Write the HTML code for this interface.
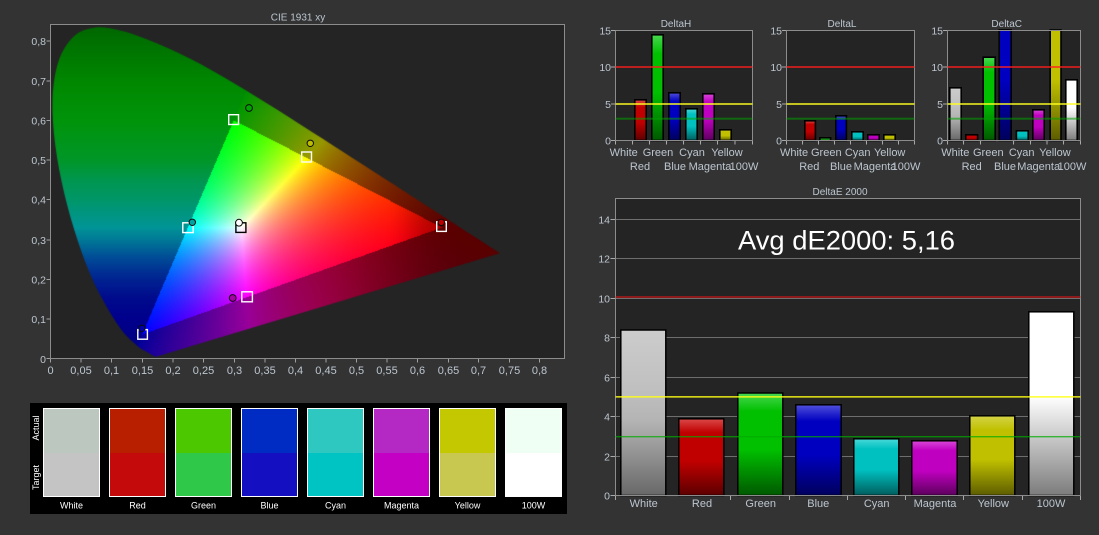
<!DOCTYPE html>
<html><head><meta charset="utf-8"><style>
html,body{margin:0;padding:0;width:1099px;height:535px;overflow:hidden;background:#333}
#g,svg,#p{position:absolute;left:0;top:0}
#p{left:50px;top:24px;width:515px;height:335px;background:#242424}
text{font-family:"Liberation Sans",sans-serif;font-size:11px;fill:#bcc6d0}
.t{font-size:10px;text-anchor:middle}
.m{text-anchor:middle}
.e{text-anchor:end;font-size:10.5px}
.s{font-size:9px;fill:#fff;text-anchor:middle}
</style></head><body>
<div id="p"></div>
<canvas id="g" width="1099" height="535"></canvas>
<svg width="1099" height="535" viewBox="0 0 1099 535" xmlns="http://www.w3.org/2000/svg">
<defs>
<linearGradient id="gr" x1="0" y1="0" x2="0" y2="1"><stop offset="0" stop-color="#dc4848"/><stop offset=".18" stop-color="#c00000"/><stop offset=".55" stop-color="#c00000"/><stop offset="1" stop-color="#5c0000"/></linearGradient>
<linearGradient id="gg" x1="0" y1="0" x2="0" y2="1"><stop offset="0" stop-color="#48d850"/><stop offset=".18" stop-color="#00c000"/><stop offset=".55" stop-color="#00c000"/><stop offset="1" stop-color="#005800"/></linearGradient>
<linearGradient id="gb" x1="0" y1="0" x2="0" y2="1"><stop offset="0" stop-color="#5050dc"/><stop offset=".18" stop-color="#0000c0"/><stop offset=".55" stop-color="#0000c0"/><stop offset="1" stop-color="#00005c"/></linearGradient>
<linearGradient id="gc" x1="0" y1="0" x2="0" y2="1"><stop offset="0" stop-color="#48d8d8"/><stop offset=".18" stop-color="#00c0c0"/><stop offset=".55" stop-color="#00c0c0"/><stop offset="1" stop-color="#005c5c"/></linearGradient>
<linearGradient id="gm" x1="0" y1="0" x2="0" y2="1"><stop offset="0" stop-color="#d848d8"/><stop offset=".18" stop-color="#c000c0"/><stop offset=".55" stop-color="#c000c0"/><stop offset="1" stop-color="#5c005c"/></linearGradient>
<linearGradient id="gy" x1="0" y1="0" x2="0" y2="1"><stop offset="0" stop-color="#d4d448"/><stop offset=".18" stop-color="#c0c000"/><stop offset=".55" stop-color="#c0c000"/><stop offset="1" stop-color="#5c5c00"/></linearGradient>
<linearGradient id="gw" x1="0" y1="0" x2="0" y2="1"><stop offset="0" stop-color="#cccccc"/><stop offset=".35" stop-color="#c0c0c0"/><stop offset=".55" stop-color="#b4b4b4"/><stop offset="1" stop-color="#686868"/></linearGradient>
<linearGradient id="gh" x1="0" y1="0" x2="0" y2="1"><stop offset="0" stop-color="#fff"/><stop offset=".46" stop-color="#fff"/><stop offset="1" stop-color="#7c7c7c"/></linearGradient>
<linearGradient id="gbo" x1="0" y1="0" x2="0" y2="1"><stop offset="0" stop-color="#0000c0"/><stop offset=".45" stop-color="#0000c0"/><stop offset="1" stop-color="#00005c"/></linearGradient>
<linearGradient id="gyo" x1="0" y1="0" x2="0" y2="1"><stop offset="0" stop-color="#c0c000"/><stop offset=".45" stop-color="#c0c000"/><stop offset="1" stop-color="#5c5c00"/></linearGradient>
</defs>

<!-- CIE chart frame -->
<path d="M50.5 24.5H564.5V358.5H50.5Z" fill="none" stroke="#8c8c8c" stroke-width="1"/>
<path fill="none" stroke="#a0a0a0" d="M46.5 41H50M46.5 81H50M46.5 120.5H50M46.5 160H50M46.5 199.5H50M46.5 240H50M46.5 279.5H50M46.5 319H50M46.5 358.5H50M50.5 359V362.5M81 359V362.5M111.5 359V362.5M142.5 359V362.5M173 359V362.5M203.5 359V362.5M234.5 359V362.5M265 359V362.5M295.5 359V362.5M326 359V362.5M356.5 359V362.5M387 359V362.5M417.5 359V362.5M448.5 359V362.5M478.5 359V362.5M509.5 359V362.5M539.5 359V362.5"/>
<text class="t" x="298" y="20.5">CIE 1931 xy</text>
<g>
<text class="e" x="46" y="45">0,8</text><text class="e" x="46" y="85">0,7</text><text class="e" x="46" y="124.5">0,6</text><text class="e" x="46" y="164">0,5</text><text class="e" x="46" y="203.5">0,4</text><text class="e" x="46" y="244">0,3</text><text class="e" x="46" y="283.5">0,2</text><text class="e" x="46" y="323">0,1</text><text class="e" x="46" y="363">0</text>
</g>
<g>
<text class="m" x="50.5" y="374">0</text><text class="m" x="81" y="374">0,05</text><text class="m" x="111.5" y="374">0,1</text><text class="m" x="142.5" y="374">0,15</text><text class="m" x="173" y="374">0,2</text><text class="m" x="203.5" y="374">0,25</text><text class="m" x="234.5" y="374">0,3</text><text class="m" x="265" y="374">0,35</text><text class="m" x="295.5" y="374">0,4</text><text class="m" x="326" y="374">0,45</text><text class="m" x="356.5" y="374">0,5</text><text class="m" x="387" y="374">0,55</text><text class="m" x="417.5" y="374">0,6</text><text class="m" x="448.5" y="374">0,65</text><text class="m" x="478.5" y="374">0,7</text><text class="m" x="509.5" y="374">0,75</text><text class="m" x="539.5" y="374">0,8</text>
</g>
<!-- markers -->
<g fill="none" stroke="#fff" stroke-width="1.4">
<rect x="228.7" y="114.7" width="9.8" height="9.8"/>
<rect x="301.7" y="152" width="9.8" height="10"/>
<rect x="436.7" y="221.8" width="9.6" height="9.6"/>
<rect x="182.8" y="222.8" width="10.4" height="9.8"/>
<rect x="241.8" y="291.8" width="10.6" height="10"/>
<rect x="137.8" y="329.6" width="9.6" height="9.6"/>
</g>
<rect x="235.9" y="222.8" width="10" height="9.6" fill="none" stroke="#000" stroke-width="1.4"/>
<g stroke="#0c0c0c" stroke-width="1">
<circle cx="249" cy="108" r="3.4" fill="#00a400"/>
<circle cx="310.3" cy="143.3" r="3.2" fill="#bcbc00"/>
<circle cx="441.3" cy="222.3" r="3.2" fill="#bc0000"/>
<circle cx="192.3" cy="222.3" r="3.2" fill="#00a4a4"/>
<circle cx="232.7" cy="298" r="3.4" fill="#a800a8"/>
<circle cx="142" cy="328.3" r="3.2" fill="#0000a8"/>
<circle cx="239" cy="222.7" r="3.4" fill="#fff"/>
</g>

<!-- Swatches -->
<rect x="30" y="403" width="537" height="111" fill="#000"/>
<g stroke="none">
<rect x="43" y="408" width="57" height="45" fill="#bcc8bf"/><rect x="43" y="453" width="57" height="44" fill="#c4c4c4"/>
<rect x="109" y="408" width="57" height="45" fill="#b81e00"/><rect x="109" y="453" width="57" height="44" fill="#c40a0a"/>
<rect x="175" y="408" width="57" height="45" fill="#4cc800"/><rect x="175" y="453" width="57" height="44" fill="#30c848"/>
<rect x="241" y="408" width="57" height="45" fill="#002cc4"/><rect x="241" y="453" width="57" height="44" fill="#140fc0"/>
<rect x="307" y="408" width="57" height="45" fill="#2ec8c0"/><rect x="307" y="453" width="57" height="44" fill="#00c4c4"/>
<rect x="373" y="408" width="57" height="45" fill="#b428c4"/><rect x="373" y="453" width="57" height="44" fill="#c400c4"/>
<rect x="439" y="408" width="57" height="45" fill="#c4c800"/><rect x="439" y="453" width="57" height="44" fill="#c8c850"/>
<rect x="505" y="408" width="57" height="45" fill="#f0fff4"/><rect x="505" y="453" width="57" height="44" fill="#fff"/>
</g>
<g fill="none" stroke="#fff" stroke-width="1">
<rect x="43.5" y="408.5" width="56" height="88"/><rect x="109.5" y="408.5" width="56" height="88"/><rect x="175.5" y="408.5" width="56" height="88"/><rect x="241.5" y="408.5" width="56" height="88"/><rect x="307.5" y="408.5" width="56" height="88"/><rect x="373.5" y="408.5" width="56" height="88"/><rect x="439.5" y="408.5" width="56" height="88"/><rect x="505.5" y="408.5" width="56" height="88"/>
</g>
<text class="s" x="71.5" y="508.5">White</text><text class="s" x="137.5" y="508.5">Red</text><text class="s" x="203.5" y="508.5">Green</text><text class="s" x="269.5" y="508.5">Blue</text><text class="s" x="335.5" y="508.5">Cyan</text><text class="s" x="401.5" y="508.5">Magenta</text><text class="s" x="467.5" y="508.5">Yellow</text><text class="s" x="533.5" y="508.5">100W</text>
<text class="s" transform="translate(39 428) rotate(-90)">Actual</text>
<text class="s" transform="translate(39 477.5) rotate(-90)">Target</text>

<!-- DeltaH -->
<rect x="615.5" y="30.5" width="137" height="110" fill="#242424"/>
<g stroke="#000" stroke-width="1.6">
<rect x="634.8" y="99.8" width="11.4" height="40.7" fill="url(#gr)"/>
<rect x="651.8" y="34.8" width="11.4" height="105.7" fill="url(#gg)"/>
<rect x="668.8" y="92.8" width="11.4" height="47.7" fill="url(#gb)"/>
<rect x="685.8" y="108.8" width="11.4" height="31.7" fill="url(#gc)"/>
<rect x="702.8" y="93.8" width="11.4" height="46.7" fill="url(#gm)"/>
<rect x="719.8" y="129.8" width="11.4" height="10.7" fill="url(#gy)"/>
</g>
<path d="M615.5 30.5H752.5V140.5H615.5Z" fill="none" stroke="#8c8c8c"/>
<path fill="none" stroke="#a8a8a8" d="M611 30.5H615M611 67H615M611 104H615M611 140.5H615M615.5 141V144.5M632.5 141V144.5M649.5 141V144.5M666.5 141V144.5M683.5 141V144.5M700.5 141V144.5M717.5 141V144.5M735 141V144.5M752.5 141V144.5"/>
<rect x="615.5" y="66" width="137" height="2" fill="rgba(255,30,30,.7)"/>
<rect x="615.5" y="103" width="137" height="2" fill="rgba(255,255,30,.72)"/>
<rect x="615.5" y="117.7" width="137" height="2" fill="rgba(0,160,0,.55)"/>
<text class="t" x="676" y="27">DeltaH</text>
<text class="e" x="611" y="34.5">15</text><text class="e" x="611" y="71">10</text><text class="e" x="611" y="108">5</text><text class="e" x="611" y="144.5">0</text>
<text class="m" x="623.7" y="156">White</text><text class="m" x="640" y="170">Red</text><text class="m" x="658" y="156">Green</text><text class="m" x="675" y="170">Blue</text><text class="m" x="692" y="156">Cyan</text><text class="m" x="710" y="170">Magenta</text><text class="m" x="727" y="156">Yellow</text><text class="m" x="744" y="170">100W</text>

<!-- DeltaL -->
<rect x="786.5" y="30.5" width="128" height="110" fill="#242424"/>
<g stroke="#000" stroke-width="1.6">
<rect x="804.8" y="120.8" width="10.6" height="19.7" fill="url(#gr)"/>
<rect x="819.8" y="137.8" width="10.8" height="2.7" fill="#20c020"/>
<rect x="835.8" y="115.8" width="10.6" height="24.7" fill="url(#gb)"/>
<rect x="851.8" y="131.8" width="11.4" height="8.7" fill="url(#gc)"/>
<rect x="867.8" y="134.8" width="11.4" height="5.7" fill="url(#gm)"/>
<rect x="883.8" y="134.8" width="11.4" height="5.7" fill="url(#gy)"/>
</g>
<path d="M786.5 30.5H914.5V140.5H786.5Z" fill="none" stroke="#8c8c8c"/>
<path fill="none" stroke="#a8a8a8" d="M782 30.5H786M782 67H786M782 104H786M782 140.5H786M786.5 141V144.5M802.5 141V144.5M818.5 141V144.5M834.5 141V144.5M850.5 141V144.5M866.5 141V144.5M882.5 141V144.5M898.5 141V144.5M914.5 141V144.5"/>
<rect x="786.5" y="66" width="128" height="2" fill="rgba(255,30,30,.7)"/>
<rect x="786.5" y="103" width="128" height="2" fill="rgba(255,255,30,.72)"/>
<rect x="786.5" y="117.7" width="128" height="2" fill="rgba(0,160,0,.55)"/>
<text class="t" x="842" y="27">DeltaL</text>
<text class="e" x="782" y="34.5">15</text><text class="e" x="782" y="71">10</text><text class="e" x="782" y="108">5</text><text class="e" x="782" y="144.5">0</text>
<text class="m" x="794" y="156">White</text><text class="m" x="809.3" y="170">Red</text><text class="m" x="826.3" y="156">Green</text><text class="m" x="841" y="170">Blue</text><text class="m" x="857.7" y="156">Cyan</text><text class="m" x="875" y="170">Magenta</text><text class="m" x="889.7" y="156">Yellow</text><text class="m" x="906" y="170">100W</text>

<!-- DeltaC -->
<rect x="947.5" y="30.5" width="133" height="110" fill="#242424"/>
<g stroke="#000" stroke-width="1.6">
<rect x="949.8" y="87.8" width="11.4" height="52.7" fill="url(#gw)"/>
<rect x="965.8" y="134.8" width="11.8" height="5.7" fill="url(#gr)"/>
<rect x="983.2" y="57.2" width="12" height="83.3" fill="url(#gg)"/>
<rect x="999.2" y="30" width="12" height="110.5" fill="url(#gbo)"/>
<rect x="1016.4" y="130.8" width="11.8" height="9.7" fill="url(#gc)"/>
<rect x="1032.8" y="109.8" width="11.4" height="30.7" fill="url(#gm)"/>
<rect x="1050.2" y="30" width="10.8" height="110.5" fill="url(#gyo)"/>
<rect x="1065.8" y="79.8" width="11.4" height="60.7" fill="url(#gh)"/>
</g>
<path d="M947.5 30.5H1080.5V140.5H947.5Z" fill="none" stroke="#8c8c8c"/>
<path fill="none" stroke="#a8a8a8" d="M943 30.5H947M943 67H947M943 104H947M943 140.5H947M947.5 141V144.5M963.5 141V144.5M980.5 141V144.5M1013.5 141V144.5M1030.5 141V144.5M1047 141V144.5M1063.5 141V144.5M1080.5 141V144.5"/>
<rect x="947.5" y="66" width="133" height="2" fill="rgba(255,30,30,.7)"/>
<rect x="947.5" y="103" width="133" height="2" fill="rgba(255,255,30,.72)"/>
<rect x="947.5" y="117.7" width="133" height="2" fill="rgba(0,160,0,.55)"/>
<text class="t" x="1006.7" y="27">DeltaC</text>
<text class="e" x="943" y="34.5">15</text><text class="e" x="943" y="71">10</text><text class="e" x="943" y="108">5</text><text class="e" x="943" y="144.5">0</text>
<text class="m" x="955.3" y="156">White</text><text class="m" x="971.7" y="170">Red</text><text class="m" x="988.3" y="156">Green</text><text class="m" x="1005" y="170">Blue</text><text class="m" x="1021.7" y="156">Cyan</text><text class="m" x="1038.7" y="170">Magenta</text><text class="m" x="1055" y="156">Yellow</text><text class="m" x="1072" y="170">100W</text>

<!-- DeltaE -->
<rect x="615.5" y="198.5" width="465" height="297" fill="#242424"/>
<path fill="none" stroke="#6e6e6e" d="M615.5 219.5H1080.5M615.5 258.5H1080.5M615.5 298.5H1080.5M615.5 337.5H1080.5M615.5 377.5H1080.5M615.5 416.5H1080.5M615.5 456.5H1080.5"/>
<g stroke="#000" stroke-width="1.5">
<rect x="620.8" y="330" width="45" height="165.5" fill="url(#gw)"/>
<rect x="678.8" y="418.8" width="45" height="76.7" fill="url(#gr)"/>
<rect x="737.8" y="393" width="45" height="102.5" fill="url(#gg)"/>
<rect x="795.8" y="404.8" width="45.4" height="90.7" fill="url(#gb)"/>
<rect x="853.8" y="438.8" width="45" height="56.7" fill="url(#gc)"/>
<rect x="911.8" y="440.8" width="45.4" height="54.7" fill="url(#gm)"/>
<rect x="969.8" y="415.8" width="45" height="79.7" fill="url(#gy)"/>
<rect x="1028.8" y="311.8" width="45" height="183.7" fill="url(#gh)"/>
</g>
<path d="M615.5 198.5H1080.5V495.5H615.5Z" fill="none" stroke="#8c8c8c"/>
<path fill="none" stroke="#a8a8a8" d="M610.5 219.5H615M610.5 258.5H615M610.5 298.5H615M610.5 337.5H615M610.5 377.5H615M610.5 416.5H615M610.5 456.5H615M610.5 495.5H615M615.5 496V500M730.5 496V500M789.5 496V500M847.5 496V500M905.5 496V500M963.5 496V500M1022.5 496V500M1080.5 496V500"/>
<rect x="615.5" y="296" width="465" height="2" fill="rgba(230,20,20,.55)"/>
<rect x="615.5" y="396" width="465" height="1" fill="rgba(255,255,20,.8)"/>
<rect x="615.5" y="397" width="465" height="1" fill="rgba(255,255,20,.55)"/>
<rect x="615.5" y="436" width="465" height="1.4" fill="rgba(0,170,0,.72)"/>
<text class="t" x="840" y="195">DeltaE 2000</text>
<text x="738" y="249.5" style="font-size:27px;fill:#fff" textLength="217" lengthAdjust="spacingAndGlyphs">Avg dE2000: 5,16</text>
<text class="e" x="610" y="223.5">14</text><text class="e" x="610" y="262.5">12</text><text class="e" x="610" y="302.5">10</text><text class="e" x="610" y="341.5">8</text><text class="e" x="610" y="381.5">6</text><text class="e" x="610" y="420.5">4</text><text class="e" x="610" y="460.5">2</text><text class="e" x="610" y="499.5">0</text>
<text class="m" x="643.7" y="507">White</text><text class="m" x="702" y="507">Red</text><text class="m" x="760.7" y="507">Green</text><text class="m" x="818.3" y="507">Blue</text><text class="m" x="876.7" y="507">Cyan</text><text class="m" x="935" y="507">Magenta</text><text class="m" x="993.3" y="507">Yellow</text><text class="m" x="1051" y="507">100W</text>
</svg>
<script>
(function(){
var L=[[.1741,.005],[.1733,.0048],[.1714,.0051],[.1689,.0069],[.1644,.0109],[.1566,.0177],[.144,.0297],[.1241,.0578],[.1096,.0868],[.0913,.1327],[.0687,.2007],[.0454,.295],[.0235,.4127],[.0082,.5384],[.0039,.6548],[.0139,.7502],[.0389,.812],[.0743,.8338],[.1142,.8262],[.1547,.8059],[.1929,.7816],[.2296,.7543],[.2658,.7243],[.3016,.6923],[.3373,.6589],[.3731,.6245],[.4087,.5896],[.4441,.5547],[.4788,.5202],[.5125,.4866],[.5448,.4544],[.5752,.4242],[.6029,.3965],[.627,.3725],[.6658,.334],[.6915,.3083],[.7079,.292],[.719,.2809],[.726,.274],[.73,.27],[.7334,.2666],[.7347,.2653]];
var LUT=[[0,0,0,130],[.05,0,0,132],[.1,0,0,140],[.15,0,10,140],[.2,0,35,145],[.25,0,72,150],[.3,0,122,150],[.33,0,148,150],[.4,0,150,105],[.45,0,150,80],[.5,0,150,40],[.6,0,148,10],[.7,0,135,0],[.83,0,105,0],[1,0,100,0]];
function lut(y){for(var i=1;i<LUT.length;i++){if(y<=LUT[i][0]){var a=LUT[i-1],b=LUT[i],t=(y-a[0])/(b[0]-a[0]);return [a[1]+(b[1]-a[1])*t,a[2]+(b[2]-a[2])*t,a[3]+(b[3]-a[3])*t];}}return [0,100,0];}
var SX=612,SY=397,OX=50.2,OY=358.5,P=.85,PI=1.05;
var off=document.createElement('canvas');off.width=1099;off.height=535;
var oc=off.getContext('2d');var im=oc.createImageData(1099,535),d=im.data;
function ss(a,b,v){var t=(v-a)/(b-a);t=t<0?0:t>1?1:t;return t*t*(3-2*t);}
for(var py=24;py<360;py++){for(var px=50;px<510;px++){
 var x=(px+.5-OX)/SX,y=Math.max((OY-py-.5)/SY,.002);
 var X=x/y,Y=1,Z=(1-x-y)/y;
 var r=3.2406*X-1.5372*Y-.4986*Z,g=-.9689*X+1.8758*Y+.0415*Z,b=.0557*X-.204*Y+1.057*Z;
 var i=(py*1099+px)*4;
 d[i+3]=255;
 if(r<0){var c0=lut((OY-py-.5)/SY);d[i]=c0[0];d[i+1]=c0[1];d[i+2]=c0[2];continue;}
 var inside=r>=0&&g>=0&&b>=0;
 r=Math.max(r,0);g=Math.max(g,0);b=Math.max(b,0);
 var m=Math.max(r,g,b,1e-6);r/=m;g/=m;b/=m;
 var f,e;
 if(inside){f=1-.3*ss(385,441,px);e=PI;}
 else{
  f=.6;e=P;
  f*=1-.3*ss(.6,.84,y);
  f*=1-.42*ss(.42,.68,x);
 }
 d[i]=255*Math.pow(r,e)*f;d[i+1]=255*Math.pow(g,e)*f;d[i+2]=255*Math.pow(b,e)*f;
}}
oc.putImageData(im,0,0);
var c=document.getElementById('g').getContext('2d');
c.fillStyle=c.createPattern(off,'no-repeat');
var Q=L.map(function(p){return [OX+p[0]*SX,OY-p[1]*SY];});
c.beginPath();c.moveTo(Q[0][0],Q[0][1]);
for(var k=0;k<Q.length-1;k++){
 var p0=Q[Math.max(k-1,0)],p1=Q[k],p2=Q[k+1],p3=Q[Math.min(k+2,Q.length-1)];
 c.bezierCurveTo(p1[0]+(p2[0]-p0[0])/6,p1[1]+(p2[1]-p0[1])/6,p2[0]-(p3[0]-p1[0])/6,p2[1]-(p3[1]-p1[1])/6,p2[0],p2[1]);
}
c.closePath();c.fill();
})();
</script>
</body></html>
